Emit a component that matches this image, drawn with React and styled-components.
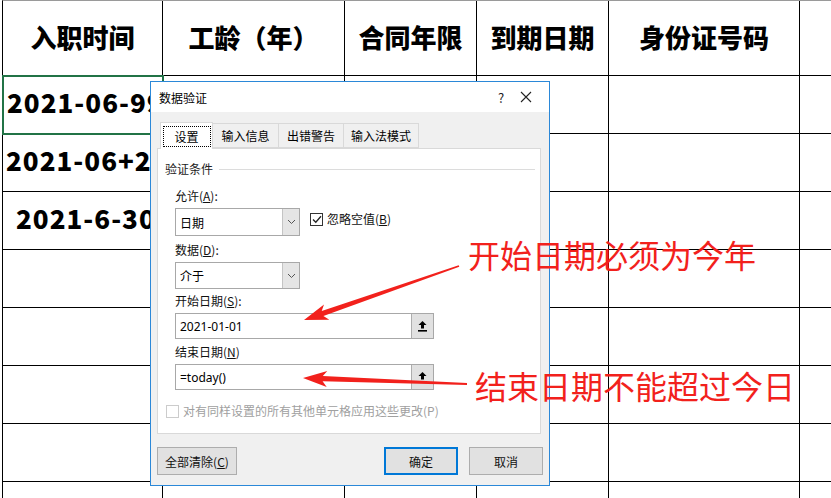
import React from "react";
import styled, { createGlobalStyle, css } from "styled-components";

const Global = createGlobalStyle`
  html, body { margin: 0; padding: 0; background: #fff; }
  body {
    width: 831px; height: 498px; overflow: hidden;
    font-family: "Noto Sans CJK SC", "Noto Sans", sans-serif;
  }
`;

const Page = styled.div`
  position: relative;
  width: 831px;
  height: 498px;
  overflow: hidden;
`;

/* ---------- worksheet ---------- */
const Sheet = styled.div`
  display: grid;
  grid-template-columns: 160px 182px 132px 132px 191px 60px;
  grid-template-rows: 75px repeat(8, 58px);
  margin-left: 2px;
  border-left: 1px solid #000;
  border-top: 1px solid #9a9a9a;
`;

const Cell = styled.div`
  box-sizing: border-box;
  border-right: 1px solid #000;
  border-bottom: 1px solid #000;
  display: flex;
  align-items: center;
  justify-content: ${(p) => (p.$head ? "center" : "flex-start")};
  padding-left: ${(p) => p.$indent || 0}px;
  padding-bottom: ${(p) => (p.$head ? 3 : 6)}px;
  font-family: "Noto Sans CJK SC", sans-serif;
  font-weight: 900;
  font-size: 26px;
  letter-spacing: ${(p) => (p.$head ? 0 : 1)}px;
  color: #000;
  white-space: nowrap;
  position: relative;
  ${(p) =>
    p.$selected &&
    css`
      outline: 2px solid #217346;
      outline-offset: -1px;
      z-index: 1;
    `}
`;

/* ---------- dialog ---------- */
const Dialog = styled.div`
  position: absolute;
  left: 150px;
  top: 81px;
  width: 400px;
  height: 405px;
  box-sizing: border-box;
  border: 1px solid #2b88d8;
  background: #f0f0f0;
  display: flex;
  flex-direction: column;
  font-family: "Noto Sans CJK SC", sans-serif;
  font-size: 12px;
  color: #000;
  z-index: 5;
`;

const TitleBar = styled.div`
  height: 30px;
  background: #fff;
  display: flex;
  align-items: center;
  padding-left: 8px;
`;

const TitleText = styled.div`
  flex: 1;
  font-size: 12px;
`;

const TitleBtn = styled.div`
  width: ${(p) => p.$w}px;
  height: 30px;
  display: flex;
  align-items: center;
  justify-content: center;
  font-size: 13px;
  color: #222;
  margin-right: ${(p) => p.$mr || 0}px;
`;

const Body = styled.div`
  flex: 1;
  display: flex;
  flex-direction: column;
  padding: 10px 6px 0 6px;
`;

const TabRow = styled.div`
  display: flex;
  align-items: flex-end;
  padding-left: 3px;
  position: relative;
  z-index: 2;
`;

const Tab = styled.div`
  box-sizing: border-box;
  width: ${(p) => p.$w}px;
  height: ${(p) => (p.$active ? 27 : 25)}px;
  margin-left: ${(p) => (p.$first ? 0 : -1)}px;
  margin-bottom: ${(p) => (p.$active ? -1 : 0)}px;
  border: 1px solid #d9d9d9;
  border-bottom: ${(p) => (p.$active ? "none" : "1px solid #d9d9d9")};
  background: ${(p) => (p.$active ? "#fff" : "#f0f0f0")};
  display: flex;
  align-items: center;
  justify-content: center;
  padding-top: ${(p) => (p.$active ? 1 : 0)}px;
  position: relative;
  z-index: ${(p) => (p.$active ? 2 : 1)};
`;

const FocusLabel = styled.span`
  box-sizing: border-box;
  width: 48px;
  height: 21px;
  border: 1px dotted #000;
  display: flex;
  align-items: center;
  justify-content: center;
`;

const Panel = styled.div`
  box-sizing: border-box;
  width: 384px;
  height: 286px;
  border: 1px solid #d9d9d9;
  background: #fff;
  padding: 12px 0 0 0;
  display: flex;
  flex-direction: column;
  position: relative;
  z-index: 1;
`;

const GroupHead = styled.div`
  display: flex;
  align-items: center;
  padding-left: 7px;
  padding-right: 5px;
  line-height: 16px;
  color: #222;
`;

const GroupLine = styled.div`
  flex: 1;
  height: 1px;
  background: #dcdcdc;
  margin-left: 6px;
`;

const Fields = styled.div`
  display: flex;
  flex-direction: column;
  padding-left: 17px;
`;

const Label = styled.div`
  line-height: 16px;
  margin-top: ${(p) => p.$mt}px;
  margin-bottom: 4px;
  color: #111;
  u { text-decoration: underline; }
`;

const Row = styled.div`
  display: flex;
  align-items: flex-start;
`;

const Select = styled.div`
  box-sizing: border-box;
  width: 125px;
  height: ${(p) => p.$h}px;
  border: 1px solid #a8a8a8;
  background: #fff;
  display: flex;
`;

const SelectText = styled.div`
  flex: 1;
  display: flex;
  align-items: center;
  padding-left: 4px;
  font-size: 12px;
`;

const DropBtn = styled.div`
  width: 16px;
  background: #e5e5e5;
  border-left: 1px solid #c4c4c4;
  display: flex;
  align-items: center;
  justify-content: center;
`;

const RangeInput = styled.div`
  box-sizing: border-box;
  width: 259px;
  height: 26px;
  border: 1px solid #a8a8a8;
  background: #fff;
  display: flex;
`;

const InputText = styled.div`
  flex: 1;
  display: flex;
  align-items: center;
  padding-left: 4px;
  font-size: 12px;
  font-family: "Noto Sans", "Noto Sans CJK SC", sans-serif;
`;

const PickBtn = styled.div`
  width: 21px;
  background: #e1e1e1;
  border-left: 1px solid #adadad;
  display: flex;
  align-items: center;
  justify-content: center;
`;

const Check = styled.label`
  display: flex;
  align-items: center;
  margin-left: ${(p) => p.$ml || 0}px;
  margin-top: ${(p) => p.$mt || 0}px;
  color: ${(p) => (p.$disabled ? "#a0a0a0" : "#111")};
  line-height: 16px;
`;

const Box = styled.span`
  box-sizing: border-box;
  width: 13px;
  height: 13px;
  border: 1px solid ${(p) => (p.$disabled ? "#cccccc" : "#333")};
  background: #fff;
  margin-right: 4px;
  display: flex;
  align-items: center;
  justify-content: center;
`;

const Footer = styled.div`
  display: flex;
  align-items: center;
  margin-top: 13px;
`;

const Button = styled.div`
  box-sizing: border-box;
  width: ${(p) => p.$w}px;
  height: 28px;
  margin-left: ${(p) => p.$ml || 0}px;
  background: #e1e1e1;
  border: ${(p) => (p.$primary ? "2px solid #0078d7" : "1px solid #adadad")};
  display: flex;
  align-items: center;
  justify-content: center;
  font-size: 12px;
  color: #111;
`;

const Spacer = styled.div`
  flex: 1;
`;

/* ---------- annotations ---------- */
const Note = styled.div`
  position: absolute;
  left: ${(p) => p.$x}px;
  top: ${(p) => p.$y}px;
  font-family: "Noto Sans CJK SC", sans-serif;
  font-size: 32px;
  line-height: 32px;
  color: #f2211c;
  white-space: nowrap;
  z-index: 7;
`;

const Overlay = styled.svg`
  position: absolute;
  left: 0;
  top: 0;
  pointer-events: none;
  z-index: 8;
`;

function arrowPoints([tx, ty], [px, py], head = 24, half = 8, neck = 2.6, tail = 0.9) {
  const dx = px - tx;
  const dy = py - ty;
  const len = Math.hypot(dx, dy);
  const ux = dx / len;
  const uy = dy / len;
  const nx = uy;
  const ny = -ux;
  const bx = px - ux * head;
  const by = py - uy * head;
  const cx = px - ux * head * 0.82;
  const cy = py - uy * head * 0.82;
  const pts = [
    [px, py],
    [bx + nx * half, by + ny * half],
    [cx + nx * neck, cy + ny * neck],
    [tx + nx * tail, ty + ny * tail],
    [tx - nx * tail, ty - ny * tail],
    [cx - nx * neck, cy - ny * neck],
    [bx - nx * half, by - ny * half],
  ];
  return pts.map(([a, b]) => `${a.toFixed(1)},${b.toFixed(1)}`).join(" ");
}

const Chevron = () => (
  <svg width="9" height="6" viewBox="0 0 9 6">
    <path d="M1 1 L4.5 4.5 L8 1" fill="none" stroke="#555" strokeWidth="1" />
  </svg>
);

const PickIcon = () => (
  <svg width="11" height="12" viewBox="0 0 11 12">
    <path d="M5.5 1 L1.5 5 H4 V8.5 H7 V5 H9.5 Z" fill="#000" />
    <rect x="1" y="10" width="9" height="1.6" fill="#000" />
  </svg>
);

const Tick = () => (
  <svg width="10" height="9" viewBox="0 0 10 9">
    <path d="M1 4.5 L3.8 7.3 L9 1.3" fill="none" stroke="#222" strokeWidth="1.3" />
  </svg>
);

const headers = ["入职时间", "工龄（年）", "合同年限", "到期日期", "身份证号码", ""];
const dates = [
  { text: "2021-06-99", indent: 4 },
  { text: "2021-06+29", indent: 3 },
  { text: "2021-6-30", indent: 13 },
];

export default function App() {
  const rows = Array.from({ length: 8 }, (_, i) => i);
  return (
    <Page>
      <Global />
      <Sheet>
        {headers.map((h, i) => (
          <Cell key={"h" + i} $head>
            {h}
          </Cell>
        ))}
        {rows.map((r) =>
          headers.map((_, c) => {
            const d = c === 0 ? dates[r] : null;
            return (
              <Cell key={r + "-" + c} $indent={d ? d.indent : 0} $selected={r === 0 && c === 0}>
                {d ? d.text : ""}
              </Cell>
            );
          })
        )}
      </Sheet>

      <Dialog>
        <TitleBar>
          <TitleText>数据验证</TitleText>
          <TitleBtn $w={20}>?</TitleBtn>
          <TitleBtn $w={30} $mr={8}>
            <svg width="12" height="12" viewBox="0 0 12 12">
              <path d="M1 1 L11 11 M11 1 L1 11" stroke="#222" strokeWidth="1.1" />
            </svg>
          </TitleBtn>
        </TitleBar>
        <Body>
          <TabRow>
            <Tab $w={53} $active $first>
              <FocusLabel>设置</FocusLabel>
            </Tab>
            <Tab $w={67}>输入信息</Tab>
            <Tab $w={66}>出错警告</Tab>
            <Tab $w={76}>输入法模式</Tab>
          </TabRow>
          <Panel>
            <GroupHead>
              验证条件
              <GroupLine />
            </GroupHead>
            <Fields>
              <Label $mt={11}>
                允许(<u>A</u>):
              </Label>
              <Row>
                <Select $h={28}>
                  <SelectText>日期</SelectText>
                  <DropBtn>
                    <Chevron />
                  </DropBtn>
                </Select>
                <Check $ml={10} $mt={3}>
                  <Box>
                    <Tick />
                  </Box>
                  忽略空值(<u>B</u>)
                </Check>
              </Row>
              <Label $mt={6}>
                数据(<u>D</u>):
              </Label>
              <Select $h={27}>
                <SelectText>介于</SelectText>
                <DropBtn>
                  <Chevron />
                </DropBtn>
              </Select>
              <Label $mt={4}>
                开始日期(<u>S</u>):
              </Label>
              <RangeInput>
                <InputText>2021-01-01</InputText>
                <PickBtn>
                  <PickIcon />
                </PickBtn>
              </RangeInput>
              <Label $mt={5}>
                结束日期(<u>N</u>)
              </Label>
              <RangeInput>
                <InputText>=today()</InputText>
                <PickBtn>
                  <PickIcon />
                </PickBtn>
              </RangeInput>
            </Fields>
            <Check $ml={8} $mt={13} $disabled>
              <Box $disabled />
              对有同样设置的所有其他单元格应用这些更改(P)
            </Check>
          </Panel>
          <Footer>
            <Button $w={80}>
              全部清除(<u>C</u>)
            </Button>
            <Spacer />
            <Button $w={74} $primary>
              确定
            </Button>
            <Button $w={74} $ml={11}>
              取消
            </Button>
          </Footer>
        </Body>
      </Dialog>

      <Note $x={468} $y={238}>开始日期必须为今年</Note>
      <Note $x={475} $y={369}>结束日期不能超过今日</Note>

      <Overlay width="831" height="498" viewBox="0 0 831 498">
        <polygon points={arrowPoints([459, 266], [304, 320])} fill="#f2211c" />
        <polygon points={arrowPoints([467, 384], [303, 378])} fill="#f2211c" />
      </Overlay>
    </Page>
  );
}
